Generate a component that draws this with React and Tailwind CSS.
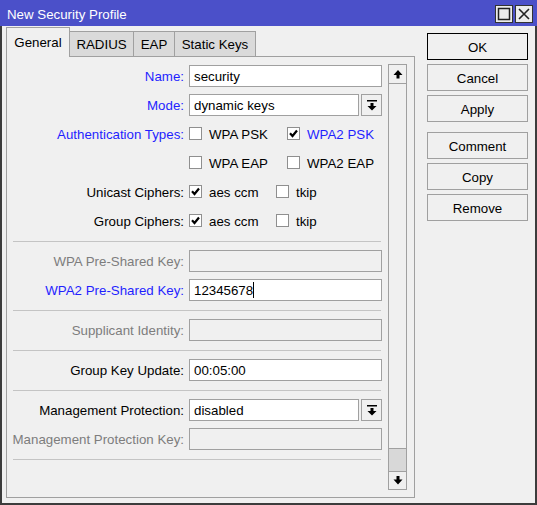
import React from "react";

// Winbox-style "New Security Profile" dialog

const Label = ({ tone, children }) => (
  <div
    className={`w-[178px] shrink-0 text-right pr-[1px] pt-[2px] whitespace-nowrap ${
      tone === "blue" ? "text-[#1f1fff]" : tone === "gray" ? "text-[#7d7d7d]" : "text-black"
    }`}
  >
    {children}
  </div>
);

const Row = ({ label, tone, children }) => (
  <div className="flex items-center h-[22px] gap-[4px]">
    <Label tone={tone}>{label}</Label>
    {children}
  </div>
);

const TextInput = ({ value, disabled, w = "w-[193px]", cursor }) => (
  <div
    className={`${w} h-[22px] border border-[#a0a0a0] px-[4px] flex items-center ${
      disabled ? "bg-[#f0f0f0]" : "bg-white"
    }`}
  >
    <span className="pt-[2px]">{value}</span>
    {cursor && <span className="w-px h-[16px] bg-black" />}
  </div>
);

const DropIcon = () => (
  <svg width="10" height="11" viewBox="0 0 10 11">
    <rect x="0" y="0" width="10" height="1.5" fill="#000" />
    <polygon points="3.5,3 6.5,3 6.5,6 9.5,6 5,10.5 0.5,6 3.5,6" fill="#000" />
  </svg>
);

const Select = ({ value }) => (
  <div className="flex gap-[2px]">
    <TextInput value={value} w="w-[170px]" />
    <div className="w-[21px] h-[22px] border border-[#a0a0a0] bg-[#f0f0f0] flex items-center justify-center">
      <DropIcon />
    </div>
  </div>
);

const Check = ({ checked, label, blue, w }) => (
  <div className={`flex items-center gap-[7px] ${w}`}>
    <div className="w-[13px] h-[13px] border border-[#8f8f8f] bg-white flex items-center justify-center">
      {checked && (
        <svg width="11" height="11" viewBox="0 0 11 11">
          <path d="M2 5.3 L4.5 8 L9 2.5" stroke="#000" strokeWidth="2.2" fill="none" />
        </svg>
      )}
    </div>
    <span className={`pt-[2px] ${blue ? "text-[#1f1fff]" : "text-black"}`}>{label}</span>
  </div>
);

const Separator = () => <div className="ml-[6px] w-[368px] h-px bg-[#c4c4c4] mt-[9px] mb-[8px]" />;

const Button = ({ children, primary, className = "" }) => (
  <div
    className={`h-[27px] w-[101px] flex items-center justify-center pt-[2px] bg-[#f0f0f0] border ${
      primary ? "border-black" : "border-[#a0a0a0]"
    } ${className}`}
  >
    {children}
  </div>
);

export default function App() {
  return (
    <div className="w-[537px] h-[505px] bg-[#f0f0f0] flex flex-col font-['Liberation_Sans',Arial,sans-serif] text-[13.3px] leading-none text-black">
      {/* Title bar */}
      <div className="h-[26px] shrink-0 bg-[#4b50c9] flex items-start justify-between pl-[7px] pr-[4px]">
        <span className="text-white mt-[8px]">New Security Profile</span>
        <div className="flex gap-[2px] mt-[5px]">
          <div className="w-[18px] h-[18px] border border-[#333] bg-[#ececec] flex items-center justify-center">
            <svg width="14" height="14" viewBox="0 0 14 14">
              <rect x="1.5" y="1.5" width="11" height="11" stroke="#222" strokeWidth="1.5" fill="none" />
            </svg>
          </div>
          <div className="w-[18px] h-[18px] border border-[#333] bg-[#ececec] flex items-center justify-center">
            <svg width="14" height="14" viewBox="0 0 14 14">
              <path d="M2 2 L12 12 M12 2 L2 12" stroke="#222" strokeWidth="1.6" />
            </svg>
          </div>
        </div>
      </div>

      {/* Body */}
      <div className="flex-1 flex border-x-2 border-b-2 border-[#3c3c3c] pl-[4px] pr-[7px] pt-[1px]">
        <div className="flex flex-col">
          {/* Tabs */}
          <div className="flex items-end relative z-10">
            <div className="w-[64px] h-[30px] border-l border-t border-r border-[#a0a0a0] bg-[#f0f0f0] flex items-center justify-center">
              General
            </div>
            <div className="w-[64px] h-[26px] border-t border-r border-b border-[#a0a0a0] bg-[#dadada] flex items-center justify-center pt-[2px]">
              RADIUS
            </div>
            <div className="w-[41px] h-[26px] border-t border-r border-b border-[#a0a0a0] bg-[#dadada] flex items-center justify-center pt-[2px]">
              EAP
            </div>
            <div className="w-[81px] h-[26px] border-t border-r border-b border-[#a0a0a0] bg-[#dadada] flex items-center justify-center pt-[2px]">
              Static Keys
            </div>
          </div>

          {/* Panel */}
          <div className="w-[409px] h-[442px] -mt-px border border-[#a0a0a0] flex">
            <div className="w-[381px] pt-[8px] flex flex-col">
              <div className="flex flex-col gap-[7px]">
                <Row label="Name:" tone="blue">
                  <TextInput value="security" />
                </Row>
                <Row label="Mode:" tone="blue">
                  <Select value="dynamic keys" />
                </Row>
                <Row label="Authentication Types:" tone="blue">
                  <Check label="WPA PSK" w="w-[94px]" />
                  <Check label="WPA2 PSK" checked blue />
                </Row>
                <Row label="">
                  <Check label="WPA EAP" w="w-[94px]" />
                  <Check label="WPA2 EAP" />
                </Row>
                <Row label="Unicast Ciphers:">
                  <Check label="aes ccm" checked w="w-[83px]" />
                  <Check label="tkip" />
                </Row>
                <Row label="Group Ciphers:">
                  <Check label="aes ccm" checked w="w-[83px]" />
                  <Check label="tkip" />
                </Row>
              </div>
              <Separator />
              <div className="flex flex-col gap-[7px]">
                <Row label="WPA Pre-Shared Key:" tone="gray">
                  <TextInput disabled />
                </Row>
                <Row label="WPA2 Pre-Shared Key:" tone="blue">
                  <TextInput value="12345678" cursor />
                </Row>
              </div>
              <Separator />
              <Row label="Supplicant Identity:" tone="gray">
                <TextInput disabled />
              </Row>
              <Separator />
              <Row label="Group Key Update:">
                <TextInput value="00:05:00" />
              </Row>
              <Separator />
              <div className="flex flex-col gap-[7px]">
                <Row label="Management Protection:">
                  <Select value="disabled" />
                </Row>
                <Row label="Management Protection Key:" tone="gray">
                  <TextInput disabled />
                </Row>
              </div>
              <Separator />
            </div>

            {/* Scrollbar */}
            <div className="w-[19px] mt-[7px] mb-[7px] border border-[#a0a0a0] flex flex-col">
              <div className="h-[19px] border-b border-[#a0a0a0] flex items-center justify-center">
                <svg width="10" height="9" viewBox="0 0 10 9">
                  <polygon points="5,0 9.5,5 6.5,5 6.5,8.5 3.5,8.5 3.5,5 0.5,5" fill="#000" />
                </svg>
              </div>
              <div className="flex-1" />
              <div className="h-[24px] bg-[#d8d8d8] border-y border-[#a0a0a0]" />
              <div className="h-[17px] flex items-center justify-center">
                <svg width="10" height="9" viewBox="0 0 10 9">
                  <polygon points="3.5,0 6.5,0 6.5,3.5 9.5,3.5 5,8.5 0.5,3.5 3.5,3.5" fill="#000" />
                </svg>
              </div>
            </div>
          </div>
        </div>

        {/* Right buttons */}
        <div className="ml-[12px] pt-[6px] flex flex-col gap-[4px]">
          <Button primary>OK</Button>
          <Button>Cancel</Button>
          <Button>Apply</Button>
          <Button className="mt-[6px]">Comment</Button>
          <Button>Copy</Button>
          <Button>Remove</Button>
        </div>
      </div>
    </div>
  );
}
